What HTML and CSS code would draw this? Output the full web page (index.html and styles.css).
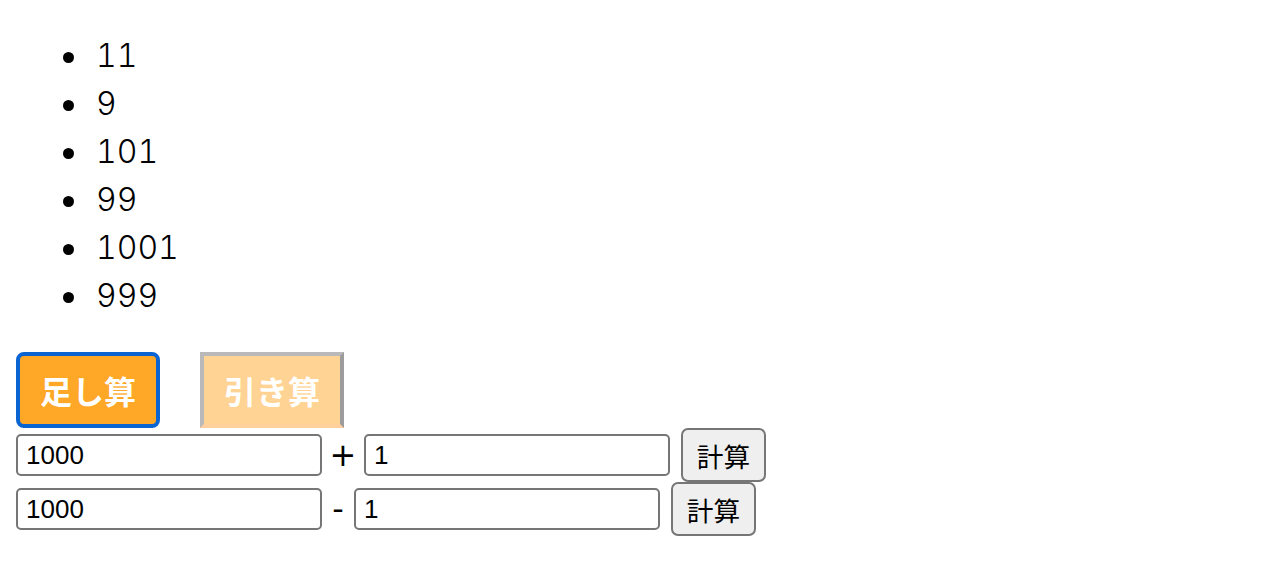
FILE: index.html
```html
<!DOCTYPE html>
<html lang="ja">
<head>
<meta charset="utf-8">
<title>計算</title>
<link rel="stylesheet" href="styles.css">
</head>
<body>
<ul class="results">
  <li>11</li>
  <li>9</li>
  <li>101</li>
  <li>99</li>
  <li>1001</li>
  <li>999</li>
</ul>
<div class="modes">
  <button class="mode mode-active" type="button">足し算</button>
  <button class="mode mode-idle" type="button">引き算</button>
</div>
<div class="calc-row">
  <input class="num" type="text" value="1000">
  <span class="op op-plus">+</span>
  <input class="num" type="text" value="1">
  <button class="run" type="button">計算</button>
</div>
<div class="calc-row">
  <input class="num" type="text" value="1000">
  <span class="op op-minus">-</span>
  <input class="num" type="text" value="1">
  <button class="run" type="button">計算</button>
</div>
</body>
</html>
```

FILE: styles.css
```css
html, body {
  background: #ffffff;
}

body {
  margin: 0 16px 16px;
  padding: 0;
  color: #000000;
  font-family: "Noto Sans CJK JP", "Noto Sans", sans-serif;
  font-size: 32px;
}

.results {
  margin: 32px 0;
  padding-left: 80px;
  list-style: none;
  font-family: Inter, "Noto Sans CJK JP", sans-serif;
  font-size: 32px;
  line-height: 48px;
  font-weight: 350;
  font-feature-settings: "tnum" 1;
}

.results li::before {
  content: "";
  display: inline-block;
  width: 11px;
  height: 11px;
  margin-left: -33px;
  margin-right: 22px;
  border-radius: 50%;
  background: #000000;
  vertical-align: 4px;
}

.modes {
  display: flex;
  gap: 40px;
  height: 76px;
}

.mode {
  width: 144px;
  height: 76px;
  padding: 0;
  font-family: "Noto Sans CJK JP", sans-serif;
  font-size: 32px;
  font-weight: 700;
  color: #ffffff;
  cursor: pointer;
}

.mode-active {
  background: #ffa726;
  border: 4px solid #0a64d2;
  border-radius: 8px;
}

.mode-idle {
  background: #ffd393;
  border-style: solid;
  border-width: 4px;
  border-color: #b9b9b9 #9c9c9c #ffcf9c #b9b9b9;
  border-radius: 0;
}

.calc-row {
  display: flex;
  align-items: center;
  height: 54px;
}

.num {
  box-sizing: border-box;
  width: 306px;
  height: 42px;
  margin: 0;
  padding: 0 8px;
  border: 2px solid #767676;
  border-radius: 5px;
  font-family: "Liberation Sans", Arial, sans-serif;
  font-size: 26px;
  color: #000000;
  background: #ffffff;
}

.op {
  display: flex;
  justify-content: center;
  align-items: center;
  font-family: "DejaVu Sans", sans-serif;
  font-weight: 400;
  font-size: 32px;
  line-height: 42px;
}

.op-plus {
  width: 42px;
}

.op-minus {
  width: 32px;
}

.run {
  box-sizing: border-box;
  width: 85px;
  height: 54px;
  margin-left: 11px;
  padding: 0;
  border: 2px solid #767676;
  border-radius: 7px;
  background: #efefef;
  font-family: "Noto Sans CJK JP", sans-serif;
  font-size: 26.67px;
  color: #000000;
}
```
